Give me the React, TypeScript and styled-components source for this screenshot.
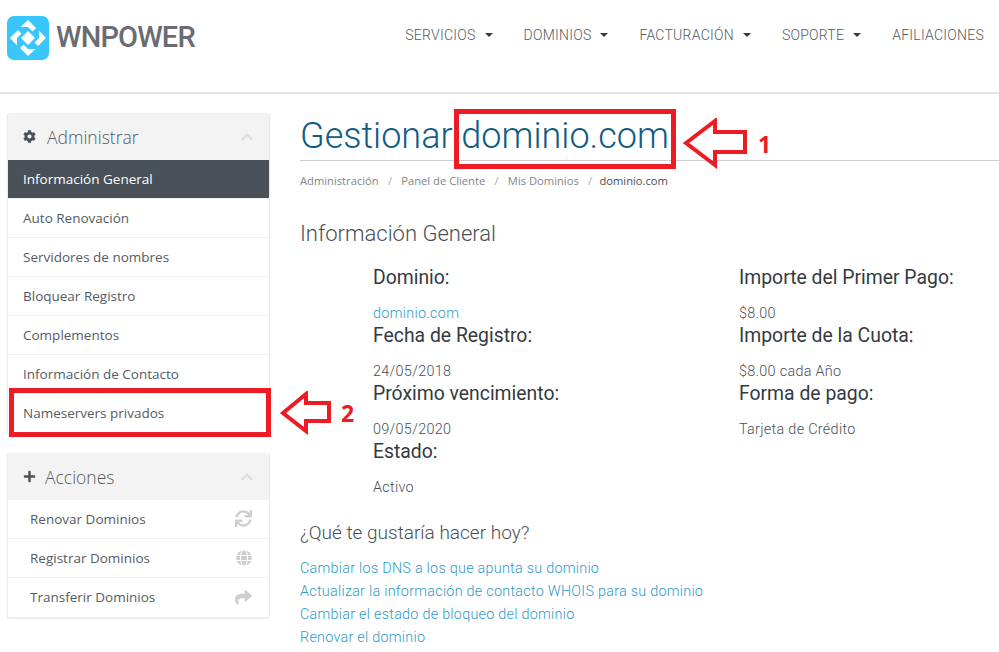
import styled, { createGlobalStyle } from "styled-components";
import { FaCog, FaPlus, FaChevronUp, FaSync, FaGlobe, FaShare } from "react-icons/fa";

const GlobalStyle = createGlobalStyle`
  html, body {
    margin: 0;
    padding: 0;
    background: #fff;
    font-family: "Open Sans", sans-serif;
  }
`;

const navItems = [
  { label: "SERVICIOS", caret: true },
  { label: "DOMINIOS", caret: true },
  { label: "FACTURACIÓN", caret: true },
  { label: "SOPORTE", caret: true },
  { label: "AFILIACIONES", caret: false },
];

const adminItems = [
  "Información General",
  "Auto Renovación",
  "Servidores de nombres",
  "Bloquear Registro",
  "Complementos",
  "Información de Contacto",
  "Nameservers privados",
];

const crumbs = ["Administración", "Panel de Cliente", "Mis Dominios"];

const leftInfo = [
  { label: "Dominio:", value: "dominio.com", link: true },
  { label: "Fecha de Registro:", value: "24/05/2018" },
  { label: "Próximo vencimiento:", value: "09/05/2020" },
  { label: "Estado:", value: "Activo" },
];

const rightInfo = [
  { label: "Importe del Primer Pago:", value: "$8.00" },
  { label: "Importe de la Cuota:", value: "$8.00 cada Año" },
  { label: "Forma de pago:", value: "Tarjeta de Crédito" },
];

const actions = [
  "Cambiar los DNS a los que apunta su dominio",
  "Actualizar la información de contacto WHOIS para su dominio",
  "Cambiar el estado de bloqueo del dominio",
  "Renovar el dominio",
];

function Logo() {
  return (
    <svg width="42" height="44" viewBox="-21 -22 42 44">
      <rect x="-21" y="-22" width="42" height="44" rx="7" fill="#38c6fb" />
      {[0, 90, 180, 270].map((angle) => (
        <polygon key={angle} points="0,-18 8,-10 4.5,-6.5 0,-11 -7.5,-11" fill="#fff" transform={`rotate(${angle})`} />
      ))}
      <polygon points="0,-7 7,0 0,7 -7,0" fill="#fff" />
    </svg>
  );
}

function ArrowOne() {
  return (
    <svg width="66" height="52" viewBox="0 0 66 52">
      <path d="M3 25 L32 3 L32 14 L62 14 L62 34 L32 34 L32 47 Z" fill="none" stroke="#ed1c24" strokeWidth="4" />
    </svg>
  );
}

function ArrowTwo() {
  return (
    <svg width="54" height="44" viewBox="0 0 54 44">
      <path d="M3 22 L26 3 L26 12 L49 12 L49 30 L26 30 L26 40 Z" fill="none" stroke="#ed1c24" strokeWidth="4" />
    </svg>
  );
}

export default function App() {
  return (
    <Page>
      <GlobalStyle />
      <Header>
        <Brand>
          <Logo />
          <Wordmark>WNPOWER</Wordmark>
        </Brand>
        <Nav>
          {navItems.map((item) => (
            <NavItem key={item.label}>
              {item.label}
              {item.caret && <Caret />}
            </NavItem>
          ))}
        </Nav>
      </Header>

      <Body>
        <Sidebar>
          <Panel>
            <PanelHeader>
              <FaCog size={13} color="#4a5157" />
              <PanelTitle $gap={11}>Administrar</PanelTitle>
              <Collapse><FaChevronUp size={14} /></Collapse>
            </PanelHeader>
            {adminItems.map((item, i) => (
              <MenuItem key={item} $active={i === 0}>{item}</MenuItem>
            ))}
          </Panel>

          <Panel>
            <PanelHeader>
              <FaPlus size={13} color="#4a5157" />
              <PanelTitle $gap={9}>Acciones</PanelTitle>
              <Collapse><FaChevronUp size={14} /></Collapse>
            </PanelHeader>
            <ActionItem>Renovar Dominios<ActionIcon><FaSync size={17} /></ActionIcon></ActionItem>
            <ActionItem>Registrar Dominios<ActionIcon><FaGlobe size={16} /></ActionIcon></ActionItem>
            <ActionItem>Transferir Dominios<ActionIcon><FaShare size={17} /></ActionIcon></ActionItem>
          </Panel>
        </Sidebar>

        <Main>
          <Title>Gestionar dominio.com</Title>
          <Breadcrumb>
            {crumbs.map((c) => (
              <Crumb key={c}>{c}<Slash>/</Slash></Crumb>
            ))}
            <CurrentCrumb>dominio.com</CurrentCrumb>
          </Breadcrumb>
          <SectionTitle>Información General</SectionTitle>
          <InfoGrid>
            <InfoColumn>
              {leftInfo.map((row) => (
                <InfoRow key={row.label}>
                  <InfoLabel>{row.label}</InfoLabel>
                  {row.link ? <InfoLink>{row.value}</InfoLink> : <InfoValue>{row.value}</InfoValue>}
                </InfoRow>
              ))}
            </InfoColumn>
            <InfoColumn>
              {rightInfo.map((row) => (
                <InfoRow key={row.label}>
                  <InfoLabel>{row.label}</InfoLabel>
                  <InfoValue>{row.value}</InfoValue>
                </InfoRow>
              ))}
            </InfoColumn>
          </InfoGrid>
          <Question>¿Qué te gustaría hacer hoy?</Question>
          <ActionLinks>
            {actions.map((a) => (
              <ActionLink key={a}>{a}</ActionLink>
            ))}
          </ActionLinks>
        </Main>
      </Body>

      <TitleBox />
      <TitleArrow><ArrowOne /></TitleArrow>
      <NoteNumber $x={758} $y={129}>1</NoteNumber>
      <MenuBox />
      <MenuArrow><ArrowTwo /></MenuArrow>
      <NoteNumber $x={341} $y={398}>2</NoteNumber>
    </Page>
  );
}

const Page = styled.div`
  position: relative;
  width: 999px;
  height: 652px;
  overflow: hidden;
  background: #fff;
`;

const Header = styled.header`
  height: 92px;
  border-bottom: 2px solid #e4e4e4;
  display: flex;
  justify-content: space-between;
  padding: 0 15px 0 7px;
`;

const Brand = styled.div`
  display: flex;
  align-items: flex-start;
  gap: 7px;
  padding-top: 16px;
`;

const Wordmark = styled.span`
  font-family: "Roboto", sans-serif;
  font-size: 29px;
  line-height: 43px;
  font-weight: 500;
  letter-spacing: -0.85px;
  color: #6b6b72;
`;

const Nav = styled.nav`
  display: flex;
  gap: 31px;
  padding-top: 26px;
`;

const NavItem = styled.span`
  display: flex;
  align-items: center;
  height: 18px;
  font-family: "Roboto", sans-serif;
  font-weight: 300;
  font-size: 14px;
  letter-spacing: 0.25px;
  color: #555b61;
`;

const Caret = styled.i`
  width: 0;
  height: 0;
  margin-left: 9px;
  border-left: 4px solid transparent;
  border-right: 4px solid transparent;
  border-top: 4px solid #343a40;
`;

const Body = styled.div`
  display: flex;
  padding: 19px 0 0 7px;
`;

const Sidebar = styled.aside`
  width: 263px;
  flex: none;
  display: flex;
  flex-direction: column;
  gap: 19px;
`;

const Panel = styled.section`
  border: 1px solid #eaeaea;
  border-top: 0;
  border-radius: 3px;
  background: #fff;
  box-shadow: 0 1px 2px rgba(0, 0, 0, 0.08);
`;

const PanelHeader = styled.div`
  height: 47px;
  display: flex;
  align-items: center;
  padding: 0 15px;
  background: #f3f3f3;
  border-radius: 3px 3px 0 0;
`;

const PanelTitle = styled.span<{ $gap: number }>`
  margin-left: ${(p) => p.$gap}px;
  font-family: "Open Sans", sans-serif;
  font-weight: 300;
  font-size: 17.5px;
  color: #555b61;
`;

const Collapse = styled.span`
  margin-left: auto;
  display: flex;
  color: #dedede;
`;

const MenuItem = styled.div<{ $active?: boolean }>`
  height: 39px;
  box-sizing: border-box;
  display: flex;
  align-items: center;
  padding: 0 15px 1px;
  font-size: 13.5px;
  color: ${(p) => (p.$active ? "#fff" : "#555b61")};
  background: ${(p) => (p.$active ? "#495057" : "#fff")};
  border-bottom: 1px solid #f1f1f1;
  &:last-child {
    border-bottom: 0;
  }
`;

const ActionItem = styled(MenuItem)`
  justify-content: space-between;
  padding: 0 17px 1px 22px;
`;

const ActionIcon = styled.span`
  display: flex;
  color: #cfcfcf;
`;

const Main = styled.main`
  flex: 1;
  margin-left: 30px;
  min-width: 0;
`;

const Title = styled.h1`
  margin: 0;
  height: 47px;
  border-bottom: 1px solid #cfcfcf;
  font-family: "Roboto", sans-serif;
  font-weight: 300;
  font-size: 36px;
  line-height: 46px;
  color: #0e5c87;
`;

const Breadcrumb = styled.div`
  display: flex;
  height: 20px;
  align-items: center;
  margin-top: 9px;
  font-size: 11.2px;
  color: #80868b;
`;

const Crumb = styled.span`
  display: flex;
`;

const Slash = styled.span`
  margin: 0 9.25px;
  color: #a9adb1;
`;

const CurrentCrumb = styled.span`
  margin-left: -2px;
  color: #495057;
`;

const SectionTitle = styled.h2`
  margin: 30px 0 0;
  font-family: "Roboto", sans-serif;
  font-weight: 300;
  font-size: 22px;
  line-height: 28px;
  color: #495057;
`;

const InfoGrid = styled.div`
  display: grid;
  grid-template-columns: 366px 1fr;
  padding: 18px 0 0 73px;
`;

const InfoColumn = styled.div`
  display: flex;
  flex-direction: column;
`;

const InfoRow = styled.div`
  height: 58px;
`;

const InfoLabel = styled.div`
  font-family: "Roboto", sans-serif;
  font-size: 19.36px;
  line-height: 24px;
  height: 38px;
  color: #343a40;
`;

const InfoValue = styled.div`
  font-family: "Roboto", sans-serif;
  font-weight: 300;
  font-size: 14.4px;
  letter-spacing: 0.3px;
  line-height: 20px;
  color: #495057;
`;

const InfoLink = styled(InfoValue)`
  color: #2f9ac9;
`;

const Question = styled.h3`
  margin: 23px 0 0;
  font-family: "Roboto", sans-serif;
  font-weight: 300;
  font-size: 19px;
  line-height: 24px;
  color: #495057;
`;

const ActionLinks = styled.div`
  display: flex;
  flex-direction: column;
  margin-top: 12px;
`;

const ActionLink = styled.a`
  font-family: "Roboto", sans-serif;
  font-weight: 300;
  font-size: 14.4px;
  letter-spacing: 0.25px;
  line-height: 23px;
  color: #2f9ac9;
`;

const TitleBox = styled.div`
  position: absolute;
  left: 454px;
  top: 109px;
  width: 222px;
  height: 60px;
  box-sizing: border-box;
  border: 5px solid #ed1c24;
`;

const TitleArrow = styled.div`
  position: absolute;
  left: 683px;
  top: 118px;
  display: flex;
`;

const MenuBox = styled.div`
  position: absolute;
  left: 9px;
  top: 388px;
  width: 262px;
  height: 49px;
  box-sizing: border-box;
  border: 5px solid #ed1c24;
`;

const MenuArrow = styled.div`
  position: absolute;
  left: 280px;
  top: 391px;
  display: flex;
`;

const NoteNumber = styled.span<{ $x: number; $y: number }>`
  position: absolute;
  left: ${(p) => p.$x}px;
  top: ${(p) => p.$y}px;
  font-family: "Open Sans", sans-serif;
  font-weight: 700;
  font-size: 23px;
  line-height: 30px;
  color: #ed1c24;
`;
